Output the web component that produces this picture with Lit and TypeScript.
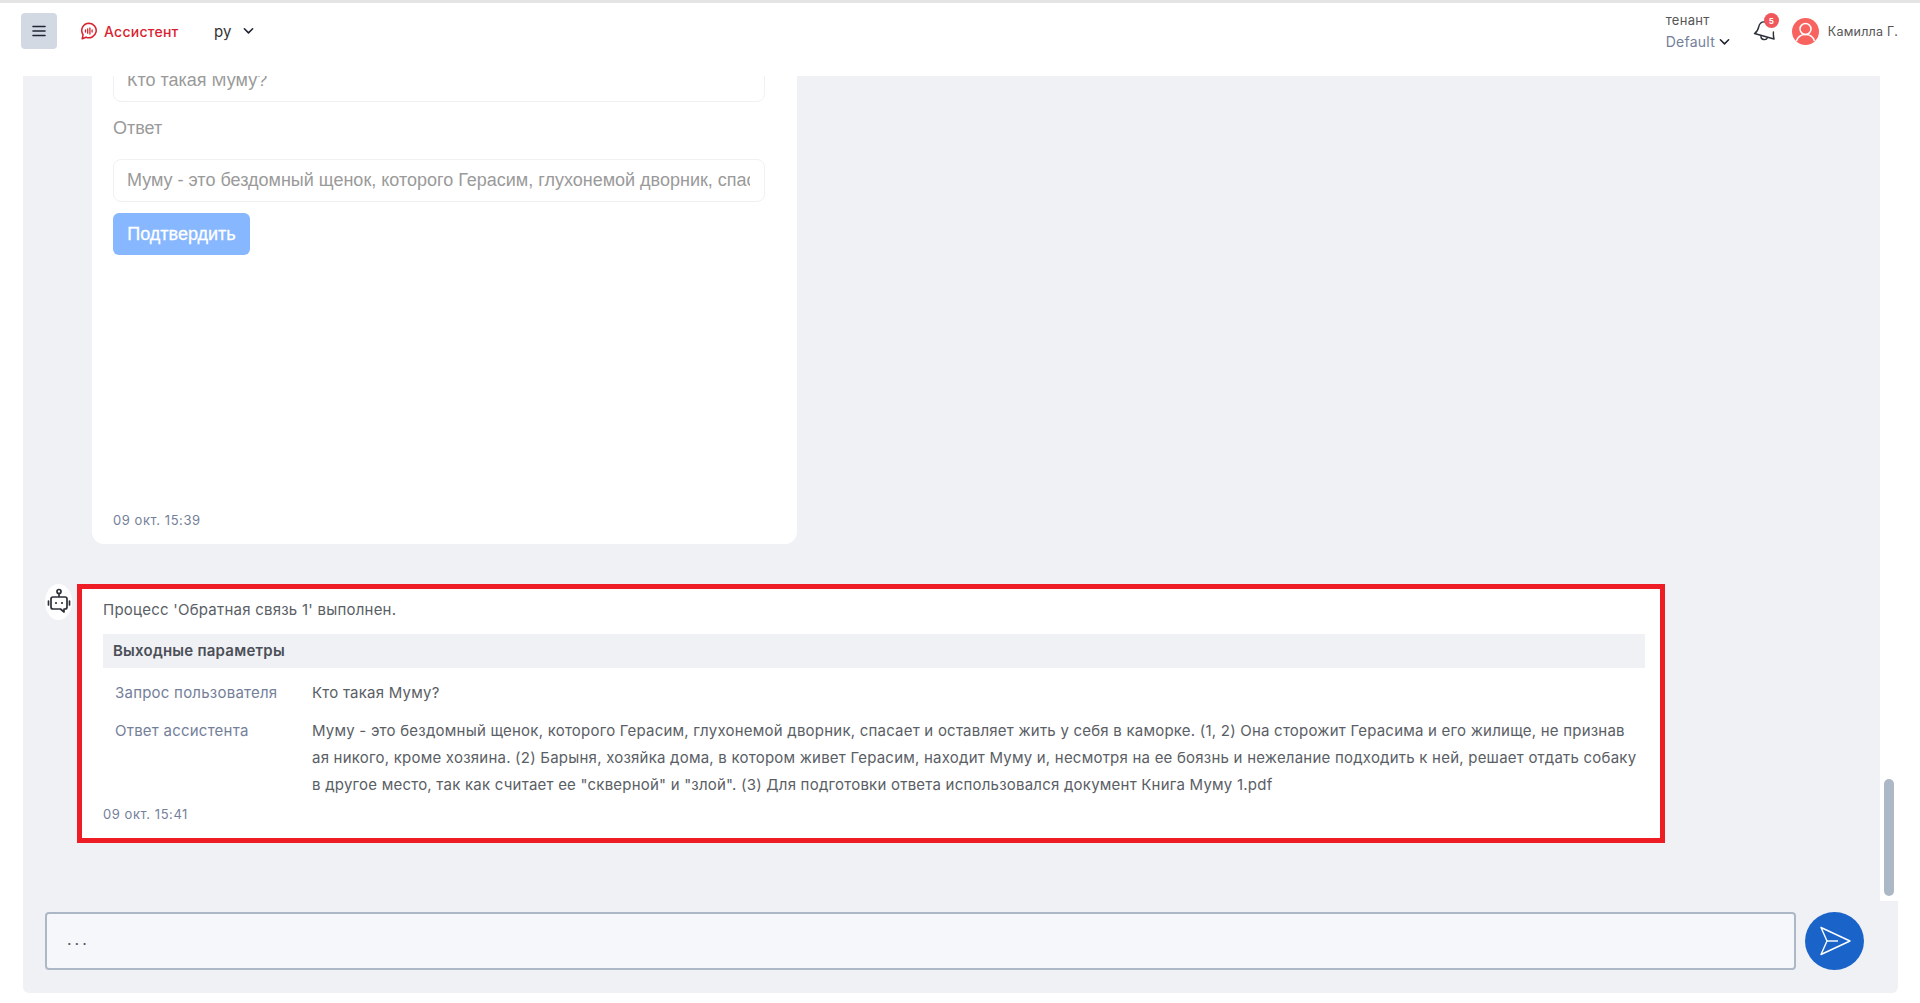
import { LitElement, html, css } from "lit";
import { customElement } from "lit/decorators.js";

const chev = html`<svg class="chev" viewBox="0 0 12 8" width="11" height="8"><path d="M1.500 1.500 6 6l4.500-4.500" fill="none" stroke="#1f2430" stroke-width="1.700" stroke-linecap="round" stroke-linejoin="round"/></svg>`;

@customElement("app-root")
export class AppRoot extends LitElement {
  static styles = css`
    :host { display:flex; flex-direction:column; width:1920px; height:1003px; background:#fff; font-family:Inter,"Noto Sans",sans-serif; color:#5a5e65; overflow:hidden; }
    .top { height:56px; flex:none; border-top:3px solid #e4e4e4; display:flex; align-items:center; padding:0 22px 17px 21px; box-sizing:content-box; }
    .burger { width:36px; height:36px; border-radius:4px; background:#d3d9e3; display:flex; align-items:center; justify-content:center; }
    .brand { display:flex; align-items:center; gap:6px; margin-left:23px; color:#d8232f; font-size:14px; font-weight:500; letter-spacing:.25px; width:113px; white-space:nowrap; }
    .lang { display:flex; align-items:center; gap:12px; margin-left:21px; font-size:15px; color:#333; }
    .spacer { flex:1; }
    .tenant { display:flex; flex-direction:column; gap:5px; font-size:13px; letter-spacing:.3px; color:#555; width:87px; }
    .tenant .val { font-size:14px; letter-spacing:.25px; color:#74809a; display:flex; align-items:center; gap:4px; }
    .bell { position:relative; width:26px; height:26px; margin-right:13px; }
    .badge { position:absolute; left:11px; top:-5px; width:15px; height:15px; border-radius:50%; background:#f0565a; color:#fff; font-size:8px; font-weight:700; display:flex; align-items:center; justify-content:center; }
    .user { display:flex; align-items:center; gap:9px; font-size:12.500px; letter-spacing:.25px; color:#555; }
    .main { flex:1; min-height:0; display:flex; flex-direction:column; margin:0 22px 10px 23px; }
    .upper { flex:1; min-height:0; display:flex; }
    .chat { flex:1; min-width:0; background:#f0f1f5; display:flex; flex-direction:column; justify-content:flex-end; padding:0 0 58px 22px; overflow:hidden; }
    .gutter { width:18px; background:#fff; display:flex; flex-direction:column; justify-content:flex-end; align-items:center; padding-bottom:5px; }
    .thumb { width:10px; height:117px; border-radius:5px; background:#adb8c7; }
    .card { flex:none; margin-left:47px; width:705px; box-sizing:border-box; background:#fff; border-radius:12px; padding:20px 32px 16px 21px; margin-bottom:40px; font-family:"Liberation Sans",Arial,sans-serif; }
    .field { height:43px; box-sizing:border-box; border:1px solid #f1f1f3; border-radius:8px; padding:0 14px 0 13px; font-size:18px; line-height:41px; color:#9a9a9a; white-space:nowrap; }
    .field span { display:block; overflow:hidden; }
    .lbl { font-size:18px; color:#9a9a9a; margin:16px 0 21px; line-height:20px; }
    .btn { width:137px; height:42px; margin-top:11px; border-radius:6px; background:#86b7ff; color:#fff; font-size:18px; display:flex; align-items:center; justify-content:center; -webkit-text-stroke:.3px #fff; }
    .spacef { height:257px; }
    .time { font-family:Inter,sans-serif; font-size:13px; letter-spacing:.55px; color:#74809a; line-height:16px; }
    .msg { display:flex; align-items:flex-start; }
    .ava { width:27px; height:36px; border-radius:50%; background:#fff; display:flex; align-items:center; justify-content:center; margin-right:5px; flex:none; }
    .bubble { width:1588px; height:259px; box-sizing:border-box; border:5px solid #ee1c25; background:#fff; padding:10px 15px 0 21px; font-size:15px; letter-spacing:.23px; }
    .bubble p { margin:0; line-height:21px; }
    .head { margin-top:14px; height:34px; background:#f0f1f5; padding-left:10px; font-weight:600; line-height:34px; color:#4a4f57; }
    .rows { padding:11px 0 0 12px; display:grid; grid-template-columns:197px 1fr; row-gap:11px; line-height:27px; }
    .k { color:#74809a; }
    .bubble .v p { line-height:27px; white-space:nowrap; letter-spacing:.22px; }
    .bubble .time { margin-top:8px; }
    .compose { height:92px; flex:none; box-sizing:border-box; background:#f0f1f5; border-radius:0 0 6px 6px; display:flex; align-items:flex-start; padding:11px 0 0 22px; }
    .input { width:1751px; height:58px; box-sizing:border-box; border:2px solid #adb8c7; border-radius:4px; background:#f6f7fa; padding:0 20px; line-height:50px; font-size:16px; color:#555; letter-spacing:3px; }
    .send { width:59px; height:58px; border-radius:50%; background:#1a64c9; margin-left:9px; display:flex; align-items:center; justify-content:center; }
  `;

  render() {
    return html`
      <div class="top">
        <div class="burger"><svg width="14" height="12" viewBox="0 0 14 12"><path d="M1 1.500h12M1 6h12M1 10.500h12" stroke="#1f2733" stroke-width="1.600" stroke-linecap="round"/></svg></div>
        <div class="brand">
          <svg width="18" height="18" viewBox="0 0 18 18" fill="none"><path d="M9 1.200a7.300 7.300 0 1 1-3 14l-3.800 1.500.9-4A7.300 7.300 0 0 1 9 1.200Z" stroke="#d8232f" stroke-width="1.500" stroke-linejoin="round"/><path d="M5.500 8v2M7.700 6.800v4.400M9.900 6v6M12.100 8v2" stroke="#d8232f" stroke-width="1.300" stroke-linecap="round"/></svg>
          Ассистент
        </div>
        <div class="lang">ру ${chev}</div>
        <div class="spacer"></div>
        <div class="tenant"><span>тенант</span><span class="val">Default ${chev}</span></div>
        <div class="bell">
          <svg width="26" height="26" viewBox="0 0 26 26" fill="none"><path d="M1.500 15.500c2.800-1.800 3.600-3.600 4.200-6.500.7-3.500 3-5.500 6.500-5M1.500 15.500 21 21c-.6-2.400-.8-4.500-.6-7" stroke="#2a2f38" stroke-width="1.400" stroke-linejoin="round" stroke-linecap="round"/><path d="M8 17.500c-.3 2 .8 3.600 2.600 4 1.700.4 3.300-.4 4-2" stroke="#2a2f38" stroke-width="1.400"/></svg>
          <div class="badge">5</div>
        </div>
        <div class="user">
          <svg width="27" height="27" viewBox="0 0 27 27"><circle cx="13.500" cy="13.500" r="13.500" fill="#f9635f"/><circle cx="13.500" cy="11" r="5.500" fill="none" stroke="#fff" stroke-width="1.500"/><path d="M4.500 23c1.500-4.500 5-6.500 9-6.500s7.500 2 9 6.500" fill="none" stroke="#fff" stroke-width="1.500"/></svg>
          Камилла Г.
        </div>
      </div>
      <div class="main">
        <div class="upper">
          <div class="chat">
            <div class="card">
              <div class="field">Кто такая Муму?</div>
              <div class="lbl">Ответ</div>
              <div class="field"><span>Муму - это бездомный щенок, которого Герасим, глухонемой дворник, спасает и оставляет жить у себя в каморке.</span></div>
              <div class="btn">Подтвердить</div>
              <div class="spacef"></div>
              <div class="time">09 окт. 15:39</div>
            </div>
            <div class="msg">
              <div class="ava">
                <svg width="24" height="28" viewBox="0 0 24 28" fill="none" stroke="#2c3038" stroke-width="1.700" stroke-linejoin="round"><circle cx="12" cy="3.500" r="2"/><path d="M12 5.500V9"/><path d="M6 9h12a2 2 0 0 1 2 2v8a2 2 0 0 1-2 2h-1v3l-3.500-3H6a2 2 0 0 1-2-2v-8a2 2 0 0 1 2-2Z"/><path d="M1.500 13v4M22.500 13v4" stroke-linecap="round"/><circle cx="9" cy="15" r="1.100" fill="#2c3038" stroke="none"/><circle cx="15" cy="15" r="1.100" fill="#2c3038" stroke="none"/></svg>
              </div>
              <div class="bubble">
                <p>Процесс 'Обратная связь 1' выполнен.</p>
                <div class="head">Выходные параметры</div>
                <div class="rows">
                  <div class="k">Запрос пользователя</div><div class="v"><p>Кто такая Муму?</p></div>
                  <div class="k">Ответ ассистента</div>
                  <div class="v">
                    <p>Муму - это бездомный щенок, которого Герасим, глухонемой дворник, спасает и оставляет жить у себя в каморке. (1, 2) Она сторожит Герасима и его жилище, не признав</p>
                    <p>ая никого, кроме хозяина. (2) Барыня, хозяйка дома, в котором живет Герасим, находит Муму и, несмотря на ее боязнь и нежелание подходить к ней, решает отдать собаку</p>
                    <p>в другое место, так как считает ее "скверной" и "злой". (3) Для подготовки ответа использовался документ Книга Муму 1.pdf</p>
                  </div>
                </div>
                <div class="time">09 окт. 15:41</div>
              </div>
            </div>
          </div>
          <div class="gutter"><div class="thumb"></div></div>
        </div>
        <div class="compose">
          <div class="input">...</div>
          <div class="send"><svg width="34" height="32" viewBox="0 0 34 32" fill="none" stroke="#fff" stroke-width="1.400" stroke-linejoin="round"><path d="M3 2.500 32 16 3 29.500 9 16Z"/><path d="M9 16h11"/></svg></div>
        </div>
      </div>
    `;
  }
}
